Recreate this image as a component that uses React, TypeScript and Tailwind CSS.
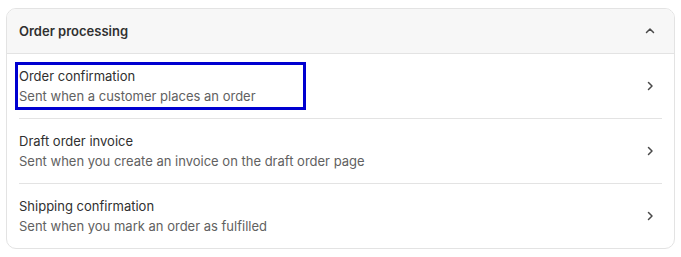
import React from "react";

const emails = [
  { title: "Order confirmation", description: "Sent when a customer places an order", focused: true },
  { title: "Draft order invoice", description: "Sent when you create an invoice on the draft order page" },
  { title: "Shipping confirmation", description: "Sent when you mark an order as fulfilled" },
];

const ChevronRight = () => (
  <svg width="16" height="16" viewBox="0 0 16 16" fill="none">
    <path d="M6.5 4.5L10 8l-3.5 3.5" stroke="#4a4a4a" strokeWidth="1.5" strokeLinecap="round" strokeLinejoin="round" />
  </svg>
);

const ChevronUp = () => (
  <svg width="16" height="16" viewBox="0 0 16 16" fill="none">
    <path d="M4.5 9.5L8 6l3.5 3.5" stroke="#4a4a4a" strokeWidth="1.5" strokeLinecap="round" strokeLinejoin="round" />
  </svg>
);

export default function App() {
  return (
    <div className="min-h-[257px] bg-white pt-2 pl-[6px] pr-[6px] font-['Inter','Noto_Sans',sans-serif] text-[13px]">
      <div className="w-[669px] rounded-[10px] border border-[#e3e3e3] overflow-hidden bg-white">
        {/* Header */}
        <div className="flex items-center justify-between bg-[#f7f7f7] border-b border-[#e3e3e3] px-3 py-3">
          <span className="leading-5 font-semibold text-[#303030]">Order processing</span>
          <span className="mr-[4px]"><ChevronUp /></span>
        </div>

        {/* Rows */}
        <div className="px-3">
          {emails.map((e, i) => (
            <div
              key={i}
              className={`flex items-center justify-between py-3 ${i > 0 ? "border-t border-[#e3e3e3]" : ""}`}
            >
              <div
                className={`w-[283px] ${e.focused ? "outline-[3px] outline-solid outline-[#0000d0] outline-offset-[1px]" : ""}`}
              >
                <div className="leading-5 text-[#303030]">{e.title}</div>
                <div className="leading-5 text-[#616161] whitespace-nowrap">{e.description}</div>
              </div>
              <span className="mr-[4px]"><ChevronRight /></span>
            </div>
          ))}
        </div>
      </div>
    </div>
  );
}
